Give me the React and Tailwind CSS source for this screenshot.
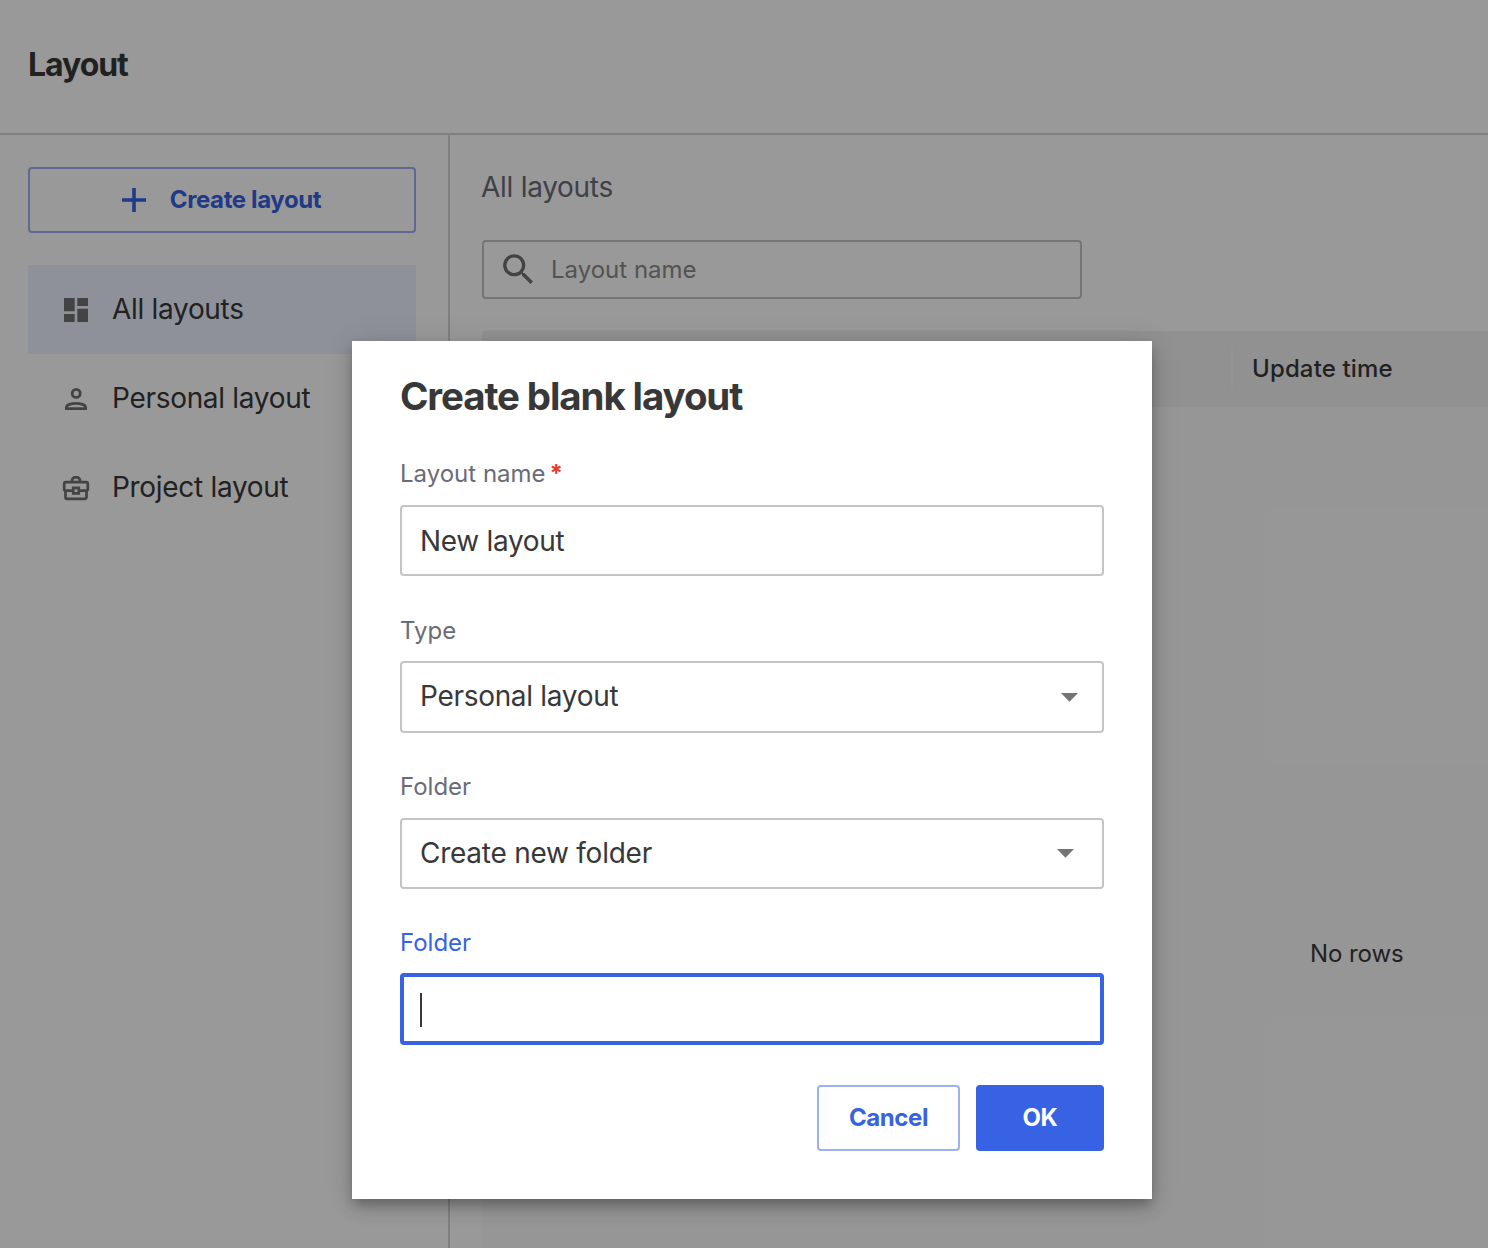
import React from "react";
import { MdArrowDropDown, MdDashboard, MdSearch } from "react-icons/md";

function PersonIcon({ className }) {
  return (
    <svg viewBox="0 0 32 32" className={className} fill="none" stroke="currentColor" strokeWidth="2.8">
      <circle cx="16.2" cy="10.4" r="4" />
      <path d="M6.4 25.6V24.4C6.4 21.8 11.4 20.3 16 20.3S25.6 21.8 25.6 24.4V25.6Z" />
    </svg>
  );
}

function BriefcaseIcon({ className }) {
  return (
    <svg viewBox="0 0 32 32" className={className} fill="none" stroke="currentColor" strokeWidth="2.7">
      <path d="M12.2 10.2V7.2L14 5.3H18L19.8 7.2V10.2" />
      <path d="M13.2 18.6H5.7A1.5 1.5 0 0 1 4.2 17.1V11.7A1.5 1.5 0 0 1 5.7 10.2H26.3A1.5 1.5 0 0 1 27.8 11.7V17.1A1.5 1.5 0 0 1 26.3 18.6H18.8" />
      <path d="M5.5 18.6V25.3A1.5 1.5 0 0 0 7 26.8H25A1.5 1.5 0 0 0 26.5 25.3V18.6" />
      <path d="M13.2 15.8H18.8V21.4H13.2Z" />
    </svg>
  );
}

function PlusIcon() {
  return (
    <svg viewBox="0 0 40 40" className="size-10" fill="none" stroke="currentColor" strokeWidth="3.6">
      <path d="M8 20H32M20 8V32" />
    </svg>
  );
}

const navItems = [
  { label: "All layouts", Icon: MdDashboard, active: true },
  { label: "Personal layout", Icon: PersonIcon },
  { label: "Project layout", Icon: BriefcaseIcon },
];

function Sidebar() {
  return (
    <aside className="flex w-[450px] shrink-0 flex-col border-r-2 border-[#d6d6d6] pt-8 pr-8 pl-7">
      <button className="flex h-[66px] items-center justify-center rounded border-2 border-[#9bb1f1] pr-[9px] text-[#3762e3]">
        <PlusIcon />
        <span className="ml-4 text-[24px] font-[650] tracking-[-0.016em]">Create layout</span>
      </button>
      <nav className="mt-8 flex flex-col">
        {navItems.map(({ label, Icon, active }) => (
          <a
            key={label}
            className={
              active
                ? "flex h-[89px] items-center gap-5 bg-[#edf2ff] pl-8"
                : "flex h-[89px] items-center gap-5 pl-8"
            }
          >
            <Icon className="size-8 text-[#717171]" />
            <span className="pb-0.5 text-[28px] tracking-[-0.011em] text-[#383838]">{label}</span>
          </a>
        ))}
      </nav>
    </aside>
  );
}

function LayoutTable() {
  return (
    <main className="flex min-w-0 flex-1 flex-col pt-[31px] pl-8">
      <h2 className="-ml-px text-[28px] leading-[42px] tracking-[-0.01em] text-[#6b6b78]">
        All layouts
      </h2>
      <div className="mt-8 flex h-[59px] w-[600px] items-center rounded border-2 border-[#c4c4c4] pl-[14px]">
        <MdSearch className="size-[41px] text-[#717171]" />
        <span className="ml-3 text-[24px] text-[#8a8a8a]">Layout name</span>
      </div>
      <section className="mt-8 flex flex-1 flex-col overflow-hidden rounded-tl bg-[#fbfbfb]">
        <div className="flex h-[76px] items-center bg-[#f2f2f2] pl-[749px]">
          <div className="mb-0.5 h-[42px] w-[2px] bg-[#f7f7f7]" />
          <span className="ml-[19px] text-[24px] font-medium tracking-[0.006em] text-[#383838]">
            Update time
          </span>
        </div>
        <div className="pt-[531px] pl-[828px] text-[24px] leading-8 tracking-[-0.003em] text-[#383838]">
          No rows
        </div>
      </section>
    </main>
  );
}

function Label({ children, className }) {
  return <div className={`text-[24px] leading-8 ${className}`}>{children}</div>;
}

function Dialog() {
  return (
    <div className="flex h-[858px] w-[800px] flex-col bg-white px-12 pt-[31px] text-[#383838] shadow-[0_6px_10px_-2px_rgba(0,0,0,0.2),0_10px_16px_0_rgba(0,0,0,0.14),0_2px_28px_0_rgba(0,0,0,0.12)]">
      <h1 className="text-[38.5px] leading-[48px] font-[650] tracking-[-0.029em]">
        Create blank layout
      </h1>

      <Label className="mt-[38px] text-[#6b6b78]">
        Layout name<span className="ml-1 font-bold text-[#ea3829]">*</span>
      </Label>
      <div className="mt-[15px] flex h-[71px] items-center rounded border-2 border-[#c4c4c4] pl-[18px] text-[28px] tracking-[-0.011em]">
        New layout
      </div>

      <Label className="mt-[39px] text-[#6b6b78]">Type</Label>
      <div className="mt-[14px] flex h-[72px] items-center justify-between rounded border-2 border-[#c4c4c4] pr-3 pb-0.5 pl-[18px] text-[28px] tracking-[-0.011em]">
        Personal layout
        <MdArrowDropDown className="size-[41px] text-[#757575]" />
      </div>

      <Label className="mt-[38px] text-[#6b6b78]">Folder</Label>
      <div className="mt-[15px] flex h-[71px] items-center justify-between rounded border-2 border-[#c4c4c4] pr-4 pb-0.5 pl-[18px] text-[28px] tracking-[-0.009em]">
        Create new folder
        <MdArrowDropDown className="size-[41px] text-[#757575]" />
      </div>

      <Label className="mt-[38px] text-[#3762e3]">Folder</Label>
      <div className="mt-[14px] flex h-[72px] items-center rounded border-4 border-[#3762e3] pl-4">
        <div className="mt-[2px] h-[34px] w-[2px] bg-[#383838]" />
      </div>

      <div className="mt-10 flex justify-end gap-4 text-[24px] font-[650] tracking-[-0.016em]">
        <button className="h-[66px] w-[143px] rounded border-2 border-[#9bb1f1] text-[#3762e3]">
          Cancel
        </button>
        <button className="h-[66px] w-32 rounded bg-[#3762e3] text-white">OK</button>
      </div>
    </div>
  );
}

export default function App() {
  return (
    <div className="relative flex h-[1248px] w-[1488px] flex-col overflow-hidden bg-white font-['Inter',sans-serif]">
      <header className="flex h-[135px] shrink-0 items-center border-b-2 border-[#d6d6d6] pb-1 pl-7">
        <span className="text-[32px] font-[650] tracking-[-0.033em] text-[#383838]">Layout</span>
      </header>
      <div className="flex min-h-0 flex-1">
        <Sidebar />
        <LayoutTable />
      </div>
      <div className="absolute inset-0 flex items-start justify-center bg-black/40 pt-[341px] pl-4">
        <Dialog />
      </div>
    </div>
  );
}
